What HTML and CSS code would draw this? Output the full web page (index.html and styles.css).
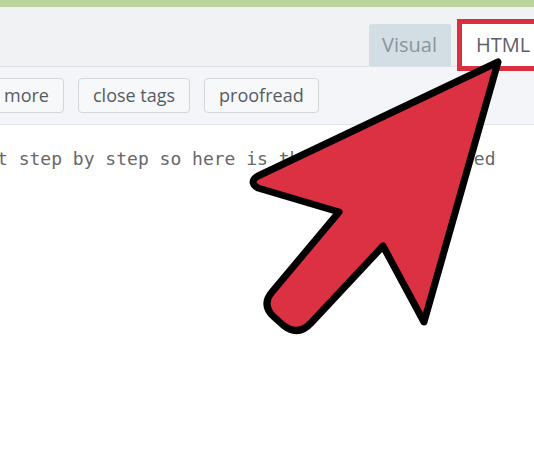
FILE: index.html
```html
<!DOCTYPE html>
<html>
<head>
<meta charset="utf-8">
<link rel="stylesheet" href="styles.css">
</head>
<body>
<div class="page">
  <div class="topbar"></div>
  <div class="tabs-row">
    <div class="tab tab-visual">Visual</div>
    <div class="tab tab-html">HTML</div>
  </div>
  <div class="toolbar">
    <button class="qt-btn qt-first">more</button>
    <button class="qt-btn">close tags</button>
    <button class="qt-btn">proofread</button>
  </div>
  <div class="editor">
    <p class="code-line">t step by step so here is the code I have used</p>
  </div>
  <svg class="arrow" viewBox="0 0 534 462" width="534" height="462">
    <path d="M 498 62 L 424 322 L 383 246 L 311 323 Q 298 337 283 325 L 274 317 Q 261 305 272 292 L 339 212 L 258 188 Q 248 182 258 176 Z"
      fill="#dc3142" stroke="#000" stroke-width="7" stroke-linejoin="round"/>
  </svg>
</div>
</body>
</html>
```
FILE: styles.css
```css
html, body {
  margin: 0;
  padding: 0;
  background: #ffffff;
}
.page {
  position: relative;
  width: 534px;
  height: 462px;
  overflow: hidden;
  font-family: "Open Sans", "Liberation Sans", sans-serif;
}
.topbar {
  height: 7px;
  background: #b8d39b;
}
.tabs-row {
  display: flex;
  justify-content: flex-end;
  align-items: flex-end;
  gap: 11px;
  background: #f0f2f4;
  padding-top: 17px;
  margin-right: -6px;
  border-bottom: 1px solid #dde2e6;
  height: 42px;
}
.tab {
  height: 42px;
  box-sizing: border-box;
  padding: 0 14px;
  font-size: 20px;
  line-height: 42px;
  border-radius: 3px 3px 0 0;
}
.tab-visual {
  background: #d3dde4;
  color: #8a949d;
  width: 82px;
  padding: 0 13px;
}
.tab-html {
  background: #ffffff;
  color: #5a6068;
  width: 78px;
  outline: 5px solid #d9303f;
  border-radius: 0;
}
.toolbar {
  display: flex;
  gap: 14px;
  padding: 11px 0;
  background: #f3f5f8;
  border-bottom: 1px solid #e0e4e7;
}
.qt-btn {
  height: 35px;
  padding: 0 14px;
  font-family: "Open Sans", "Liberation Sans", sans-serif;
  font-size: 18px;
  color: #555c63;
  background: #f7f8f9;
  border: 1px solid #d3d7db;
  border-radius: 4px;
  line-height: 33px;
}
.qt-first {
  margin-left: -11px;
}
.editor {
  padding-top: 22px;
  background: #ffffff;
}
.code-line {
  margin: 0 0 0 -3px;
  font-family: "DejaVu Sans Mono", "Liberation Mono", monospace;
  font-size: 18px;
  line-height: 24px;
  color: #676767;
  white-space: nowrap;
}
.arrow {
  position: absolute;
  left: 0;
  top: 0;
}
```
